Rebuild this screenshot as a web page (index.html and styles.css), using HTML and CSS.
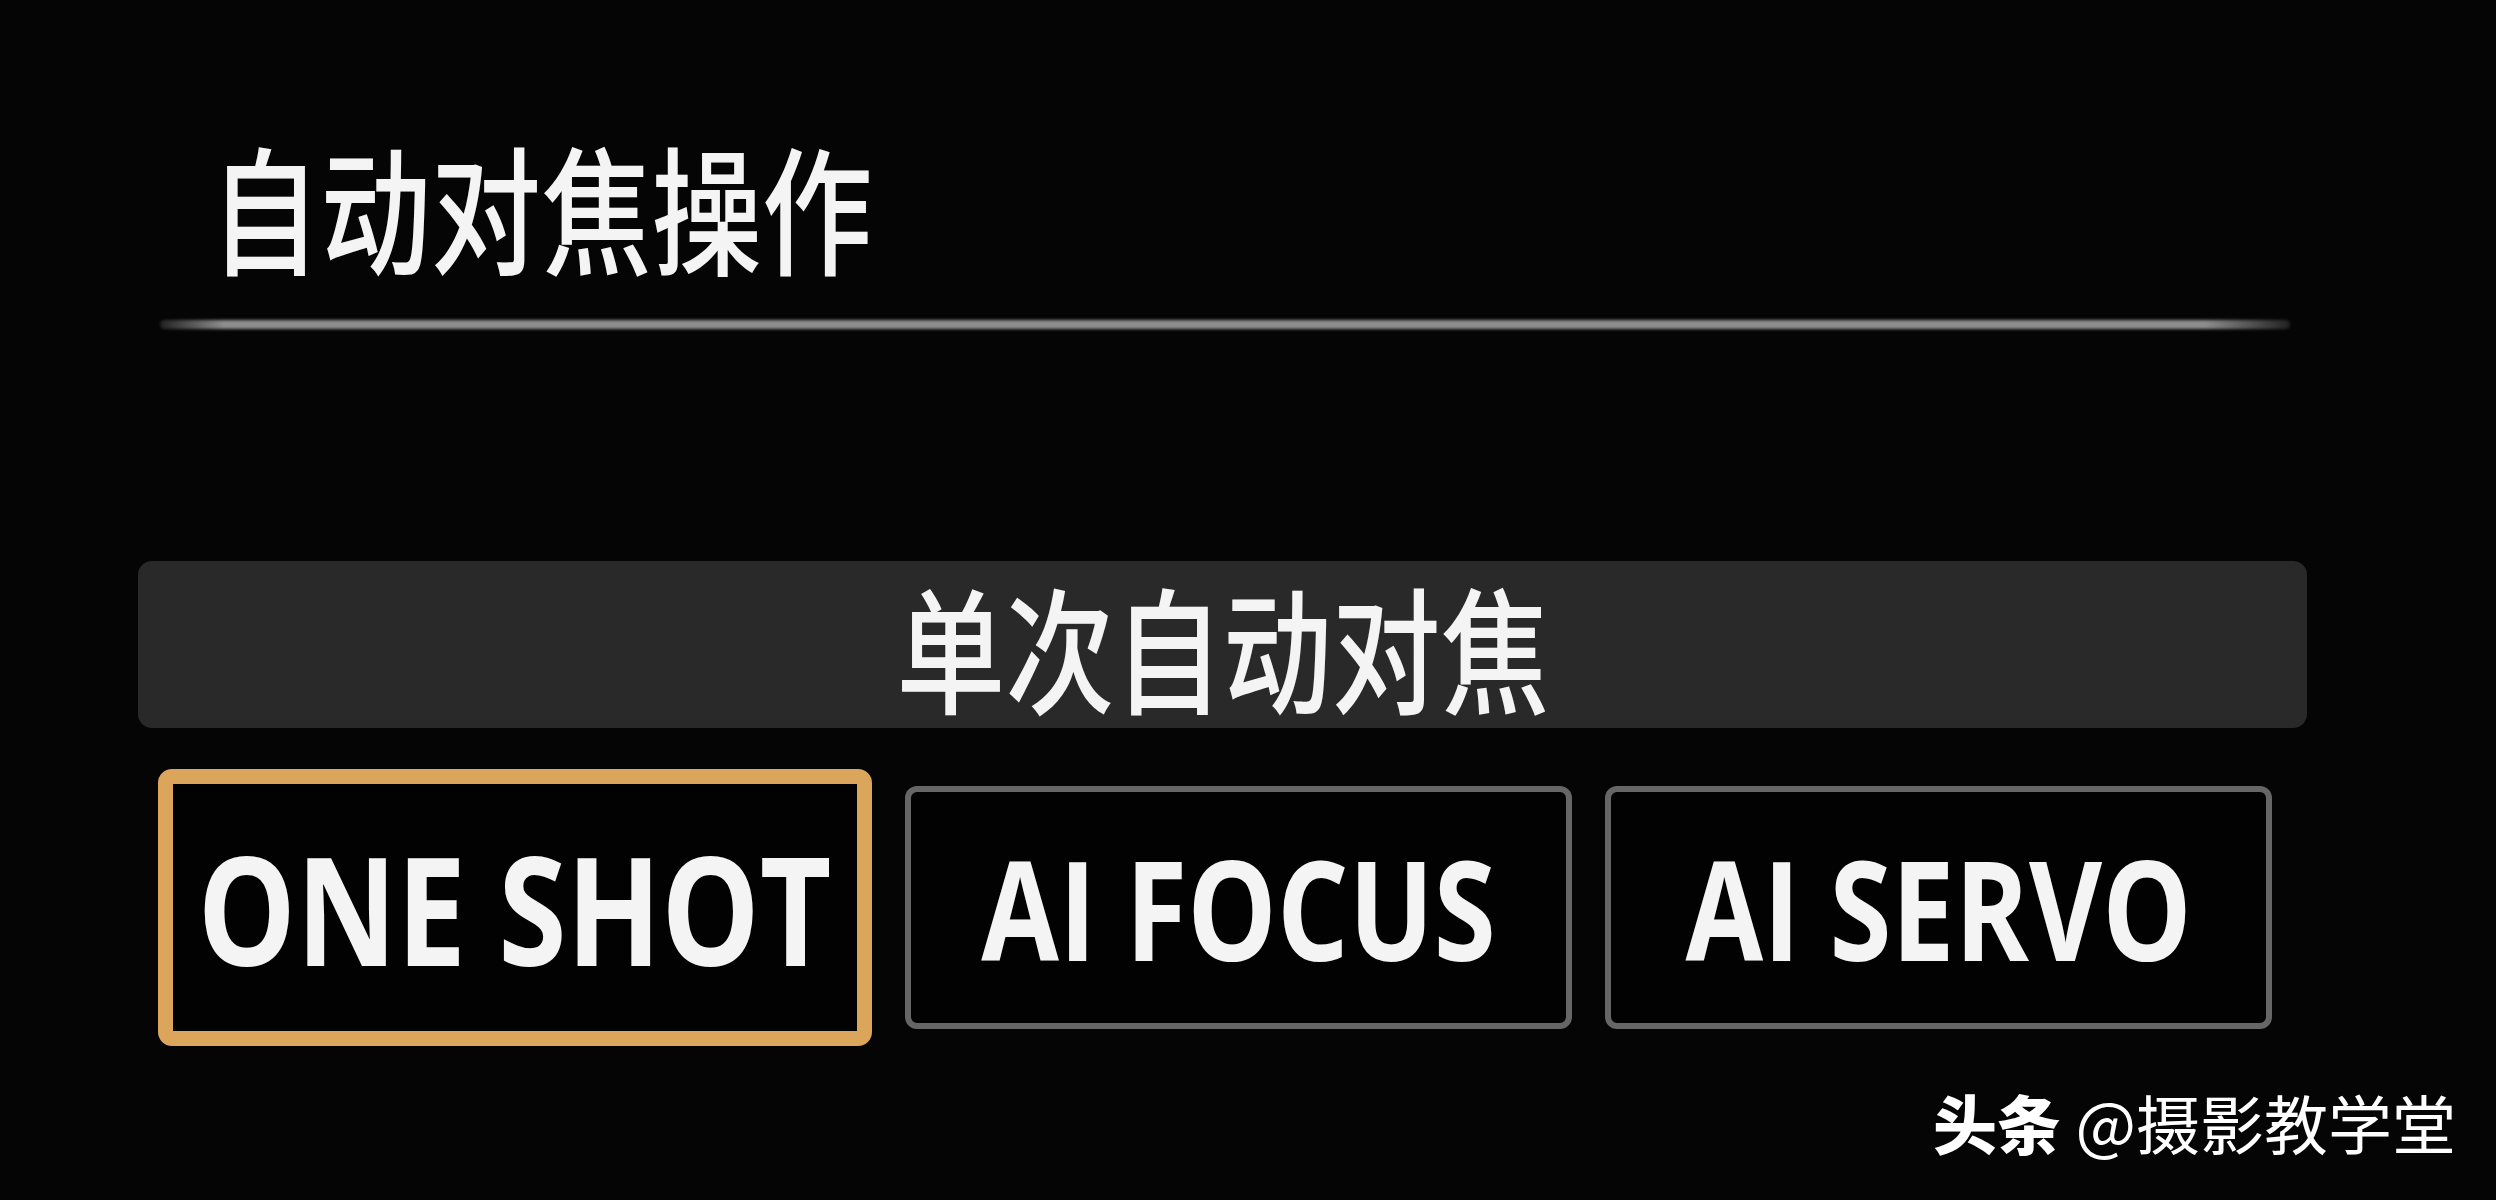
FILE: index.html
```html
<!DOCTYPE html>
<html lang="zh-CN">

<head>
    <meta charset="UTF-8">
    <meta name="viewport" content="width=device-width, initial-scale=1.0">
    <title>自动对焦操作</title>
    <link rel="stylesheet" href="styles.css">
</head>

<body>

    <div class="screen">
        <h1 class="menu-title"><span>自动对焦操作</span></h1>
        <div class="divider"></div>

        <div class="current"><span>单次自动对焦</span></div>

        <div class="options">
            <div class="option selected"><span>ONE SHOT</span></div>
            <div class="option"><span>AI FOCUS</span></div>
            <div class="option"><span>AI SERVO</span></div>
        </div>
    </div>

    <div class="credit"><b>头条</b> @摄影教学堂</div>

</body>

</html>
```

FILE: styles.css
```css
body {
    margin: 0;
    padding: 0;
    background-color: #050505;
    color: #f4f4f4;
    font-family: "Noto Sans CJK SC", "Noto Sans", sans-serif;
    width: 2496px;
    height: 1200px;
    overflow: hidden;
    position: relative;
}

.screen {
    width: 2169px;
    padding: 135px 0 0 138px;
}

/* camera menu type is drawn narrow, so squeeze the glyphs */
.menu-title {
    margin: 0 0 0 72px;
    font-size: 138px;
    font-weight: 500;
    line-height: 1;
    height: 138px;
}

.menu-title span {
    display: inline-block;
    transform: scaleX(0.8);
    transform-origin: left center;
    white-space: nowrap;
}

.divider {
    margin: 47px 17px 0 22px;
    height: 9px;
    border-radius: 5px;
    background: linear-gradient(to right, rgba(150, 150, 150, 0.2), #8d8d8d 3%, #8d8d8d 96%, rgba(150, 150, 150, 0.2));
    filter: blur(1.5px);
}

.current {
    margin-top: 232px;
    height: 167px;
    background-color: #29292a;
    border-radius: 14px;
    display: flex;
    align-items: center;
    justify-content: center;
    font-size: 136px;
    font-weight: 500;
    line-height: 1;
}

.current span {
    display: inline-block;
    transform: scaleX(0.8);
    white-space: nowrap;
}

.options {
    display: flex;
    align-items: center;
    justify-content: space-between;
    margin: 41px 35px 0 20px;
}

.option {
    box-sizing: border-box;
    width: 667px;
    height: 243px;
    border: 6px solid #666;
    border-radius: 12px;
    background-color: #020202;
    display: flex;
    align-items: center;
    justify-content: center;
    font-family: "Open Sans", "Noto Sans", sans-serif;
    font-weight: 700;
    font-size: 139px;
    line-height: 1;
}

.option span {
    display: inline-block;
    transform: scaleX(0.81);
    white-space: nowrap;
}

.option.selected {
    width: 714px;
    height: 277px;
    border: 15px solid #dca55c;
    border-radius: 14px;
    font-size: 151px;
}

.option.selected span {
    transform: scaleX(0.82);
}

.credit {
    position: absolute;
    top: 1089px;
    right: 40px;
    font-size: 64px;
    line-height: 1;
    color: #fff;
    white-space: nowrap;
}

.credit b {
    font-weight: 900;
}
```
